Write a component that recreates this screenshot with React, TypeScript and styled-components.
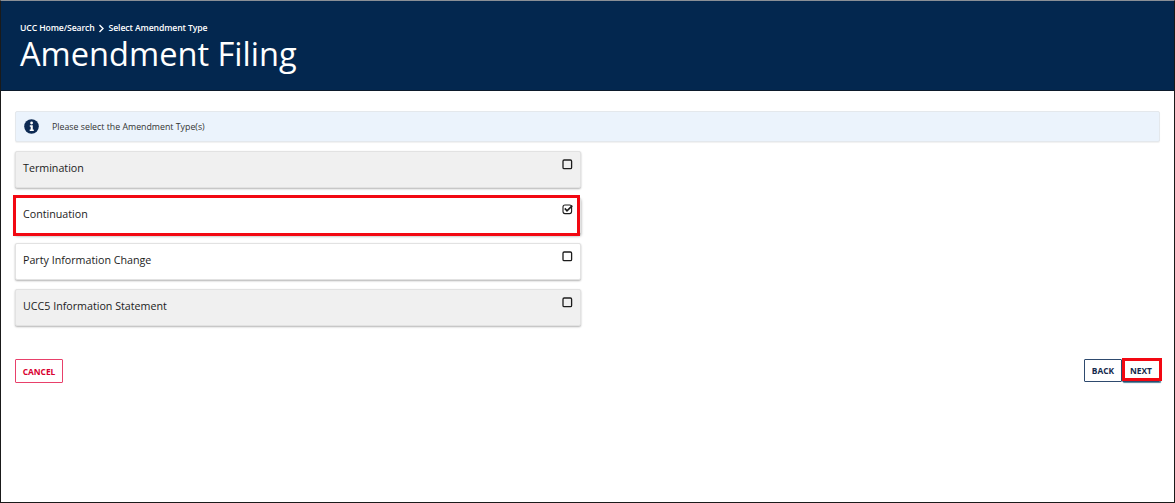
import React from "react";
import styled, { createGlobalStyle } from "styled-components";

const Global = createGlobalStyle`
  html, body { margin: 0; padding: 0; background: #fff; }
  body { font-family: "Open Sans", "Liberation Sans", sans-serif; }
`;

const Frame = styled.div`
  box-sizing: border-box;
  width: 1175px;
  height: 503px;
  border: 1px solid #1a1a1a;
  border-top-color: #8a8f96;
  background: #fff;
  display: flex;
  flex-direction: column;
`;

const Header = styled.header`
  height: 90px;
  background: #03274f;
  color: #fff;
  padding: 20px 0 0 19px;
  box-sizing: border-box;
  border-bottom: 1px solid #0c1a2b;
  flex: none;
`;

const Crumbs = styled.div`
  display: flex;
  align-items: center;
  gap: 3.5px;
  font-size: 8.65px;
  line-height: 14px;
  height: 14px;
  font-weight: 600;
  letter-spacing: -0.1px;
`;

const Title = styled.h1`
  margin: 0;
  font-size: 32.6px;
  line-height: 38px;
  font-weight: 400;
`;

const Main = styled.main`
  flex: 1;
  display: flex;
  flex-direction: column;
  padding: 20px 14px 0;
`;

const Alert = styled.div`
  height: 31px;
  box-sizing: border-box;
  width: 1145px;
  background: #ebf3fc;
  border: 1px solid #e4e8ec;
  border-radius: 2px;
  display: flex;
  align-items: center;
  padding-left: 8px;
  gap: 13px;
  font-size: 8.8px;
  color: #333;
  box-shadow: 0 1px 1px rgba(0, 0, 0, 0.06);
`;

const List = styled.div`
  margin-top: 9px;
  width: 566px;
  display: flex;
  flex-direction: column;
  gap: 9px;
`;

const Card = styled.div<{ $checked?: boolean; $shade?: boolean }>`
  position: relative;
  height: 37px;
  box-sizing: border-box;
  display: flex;
  justify-content: space-between;
  padding: 8px 7px 0 7px;
  background: ${(p) => (p.$shade ? "#f0f0f0" : "#fff")};
  border: 1px solid #e2e2e2;
  border-radius: 2px;
  box-shadow: 0 1px 2px rgba(0, 0, 0, 0.3);
  font-size: 10.7px;
  line-height: 16px;
  color: #1c1c1c;
  ${(p) =>
    p.$checked
      ? `box-shadow: 0 2px 3px rgba(0,0,0,.4);
         &::after { content: ""; position: absolute; top: -3px; left: -3px; right: 0; bottom: -3px; border: 3px solid #f20812; }`
      : ""}
`;

const Box = styled.svg<{ $checked?: boolean }>`
  width: 11px;
  height: 11px;
  flex: none;
  margin-top: ${(p) => (p.$checked ? "-2px" : "-1px")};
`;

const Actions = styled.div`
  margin-top: 33px;
  width: 1145px;
  display: flex;
  justify-content: space-between;
  align-items: flex-start;
`;

const Right = styled.div`
  display: flex;
`;

const Btn = styled.button<{ $variant: "cancel" | "back" | "next" }>`
  position: relative;
  height: ${(p) => (p.$variant === "cancel" ? "24px" : "23px")};
  width: ${(p) => (p.$variant === "cancel" ? "48px" : "38px")};
  box-sizing: border-box;
  padding: 0;
  font-family: inherit;
  font-size: 8.4px;
  font-weight: 700;
  background: #fff;
  border-radius: 1px;
  color: ${(p) => (p.$variant === "cancel" ? "#d8002f" : "#14294b")};
  border: 1px solid ${(p) => (p.$variant === "cancel" ? "#e8406a" : "#2e4a6e")};
  ${(p) =>
    p.$variant === "next"
      ? `box-shadow: 1px 1px 1px #4d7f95;
         &::after { content: ""; position: absolute; top: -2px; left: -1px; right: -3px; bottom: 0; border: 3px solid #f20812; }`
      : ""}
`;

const Check = ({ checked }: { checked?: boolean }) => (
  <Box $checked={checked} viewBox="0 0 11 11" fill="none">
    <rect x="1" y="1" width="8.6" height="8.6" rx={checked ? 2 : 1.2} stroke="#1c1c1c" strokeWidth={checked ? 1.1 : 1.3} />
    {checked && <path d="M2.8 4.4 L5 6.8 L10.3 1.6" stroke="#1c1c1c" strokeWidth="1.6" />}
  </Box>
);

const Info = () => (
  <svg width="15" height="15" viewBox="0 0 15 15">
    <circle cx="7.5" cy="7.5" r="7.3" fill="#0d2a53" />
    <circle cx="7.6" cy="4" r="1.4" fill="#fff" />
    <path d="M5.8 6.3h3v4.3h1v1.4H5.7v-1.4h1V7.7h-.9z" fill="#fff" />
  </svg>
);

const Chevron = () => (
  <svg width="7" height="9" viewBox="0 0 7 9" fill="none">
    <path d="M1.5 1 L5 4.5 L1.5 8" stroke="#fff" strokeWidth="1.4" />
  </svg>
);

export default function App() {
  return (
    <Frame>
      <Global />
      <Header>
        <Crumbs>
          <span>UCC Home/Search</span>
          <Chevron />
          <span>Select Amendment Type</span>
        </Crumbs>
        <Title>Amendment Filing</Title>
      </Header>
      <Main>
        <Alert>
          <Info />
          <span>Please select the Amendment Type(s)</span>
        </Alert>
        <List>
          <Card $shade>
            Termination
            <Check />
          </Card>
          <Card $checked>
            Continuation
            <Check checked />
          </Card>
          <Card>
            Party Information Change
            <Check />
          </Card>
          <Card $shade>
            UCC5 Information Statement
            <Check />
          </Card>
        </List>
        <Actions>
          <Btn $variant="cancel">CANCEL</Btn>
          <Right>
            <Btn $variant="back">BACK</Btn>
            <Btn $variant="next">NEXT</Btn>
          </Right>
        </Actions>
      </Main>
    </Frame>
  );
}
